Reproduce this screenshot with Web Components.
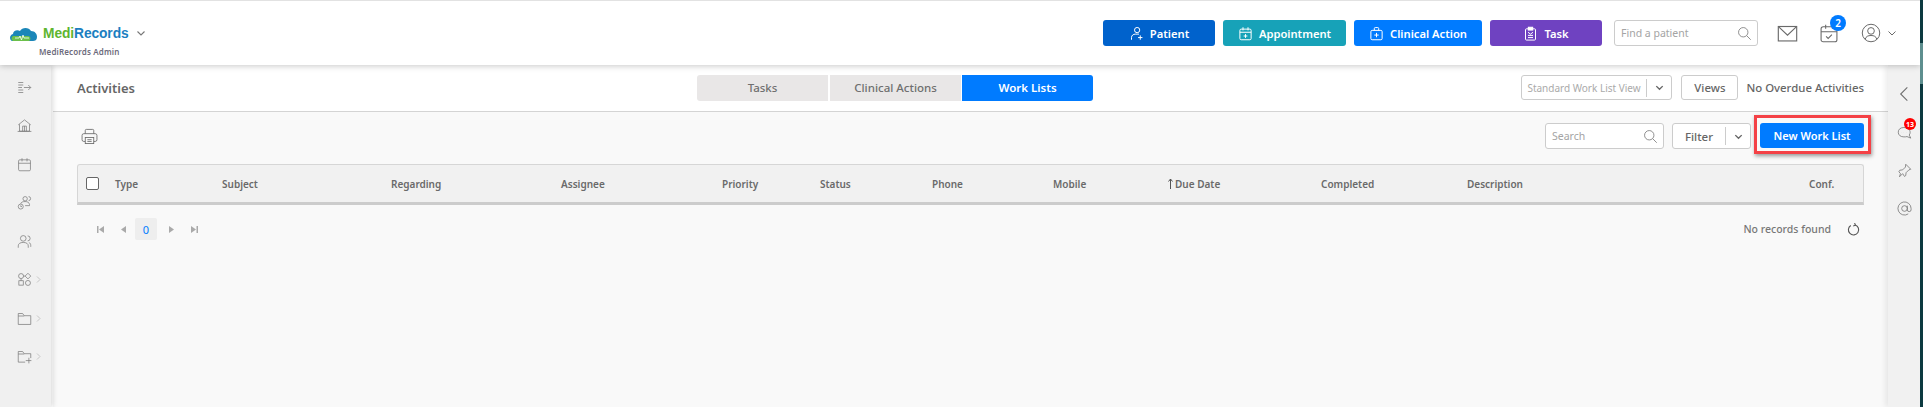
<!DOCTYPE html>
<html>
<head>
<meta charset="utf-8">
<title>Activities</title>
<style>
    html, body { margin: 0; height: 100%; overflow: hidden; background: #fff; }
    body { font-family: "Noto Sans", "Open Sans", sans-serif; color: #666; }
</style>
</head>
<body>
<medi-app></medi-app>
<script>
// stroke icons shared by all the elements, 24 box
const ICONS = {
    patient: '<circle cx="13" cy="6.5" r="4.2"/><path d="M4 22v-3.5c0-3.500 3-5.500 6-5.500h6"/><path d="M18 15v7M14.5 18.500h7"/>',
    appointment: '<rect x="3" y="5" width="18" height="17" rx="2"/><path d="M3 10h18M8 2v5M16 2v5M12 13v6M9 16h6"/>',
    clinical: '<rect x="3" y="7" width="18" height="15" rx="2"/><path d="M8.5 7V4A1.500 1.500 0 0 1 10 2.500h4A1.500 1.500 0 0 1 15.500 4v3M12 11v7M8.500 14.500h7"/>',
    task: '<rect x="4" y="4.5" width="16" height="18" rx="1.5"/><rect x="8.5" y="2" width="7" height="4.500" fill="currentColor"/><path d="M8 10l4 3 4-3M8 15h8M8 18.500h8"/>',
    search: '<circle cx="10" cy="10" r="7.5"/><path d="M15.5 15.500L22 22"/>',
    mail: '<rect x="1.5" y="4" width="21" height="16.500"/><path d="M2 4.500l10 9.500 10-9.500"/>',
    calcheck: '<rect x="2.5" y="4.5" width="19" height="18" rx="2.500"/><path d="M2.5 10.500h19M8 2v5M16 2v5M8.500 16l2.500 2.500 4.500-4.500"/>',
    user: '<circle cx="12" cy="12" r="10.5"/><circle cx="12" cy="9.500" r="4"/><path d="M5 19.500c1-3.500 3.500-4.500 7-4.500s6 1 7 4.500"/>',
    chevron: '<path d="M5 9l7 7 7-7"/>',
    collapse: '<path d="M2 4h8M2 8h8M2 12h6M2 16h8M2 20h8M11 12h11M18 8l4 4-4 4"/>',
    home: '<path d="M2 11L12 3l10 8M4 10v11h16V10M1 21.500h22M9 21v-8h6v8M12 13v8"/>',
    calendar: '<rect x="2.5" y="4.5" width="19" height="17.500" rx="2"/><path d="M2.5 10h19M8 2v5M16 2v5"/>',
    people: '<circle cx="13" cy="6" r="3.5"/><path d="M6 14c.5-2.500 3-3.500 7-3.500s6.500 1.500 7 4.500v2h-7M18.500 2.500a3.200 3.200 0 0 1 0 6.500"/><circle cx="6" cy="18.500" r="4"/><path d="M6 16.500v2h2"/>',
    users: '<circle cx="10" cy="7" r="4.5"/><path d="M2 22v-3c0-3.500 3-5.500 8-5.500s8 2 8 5.500v3M17 3a4 4 0 0 1 0 8M19 13.500c2 1 3 2.500 3 5v2"/>',
    workflow: '<circle cx="6.5" cy="6.5" r="4"/><path d="M17.5 2L22 6.500 17.5 11 13 6.500z"/><rect x="3" y="14" width="7" height="7"/><circle cx="17.5" cy="17.5" r="4"/><path d="M10.5 6.500H13M6.500 10.500V14"/>',
    folder: '<path d="M2 21.500V4h7l2.500 3.500H22v14z"/><path d="M2 8h9.500"/>',
    folderplus: '<path d="M13 21H2V4h7l2.500 3.500H22v7"/><path d="M2 8h9.500M19 14v9M14 18.500h9"/>',
    right: '<path d="M8 4l8 8-8 8"/>',
    back: '<path d="M17 2L7 12l10 10"/>',
    chat: '<path d="M11 4c5.500 0 10 3.200 10 7.500 0 2-.5 3.500-1.500 4.500l2.500 5-6-2.500c-1.500.5-3 .5-5 .5-5.500 0-9-3-9-7.500S5.500 4 11 4z"/><path d="M7 12h.1M11 12h.1M15 12h.1"/>',
    pin: '<path d="M14 2l8 8-3 1-4.500 4.500-.5 4.500-2 1.500-3-4.500L4 22l1.500-5L3 14l1.500-2.500L9 11l4.500-4.500z"/>',
    at: '<circle cx="12" cy="12" r="4.5"/><path d="M16.5 7.500v6.500a3 3 0 0 0 6 0v-2a10.500 10.500 0 1 0-4.500 8.600"/>',
    printer: '<path d="M6 8V3.500A1.500 1.500 0 0 1 7.500 2h9A1.500 1.500 0 0 1 18 3.500V8"/><path d="M6 19H4a2.500 2.500 0 0 1-2.500-2.500v-6A2.500 2.500 0 0 1 4 8h16a2.500 2.500 0 0 1 2.500 2.500v6A2.500 2.500 0 0 1 20 19h-2"/><rect x="6" y="13.5" width="12" height="8.500"/><path d="M9 16.500h6M9 19h6M18.500 11h.1"/>',
    refresh: '<path d="M15 3.500A9.500 9.500 0 1 1 7 4.500"/><path d="M14 0l1.500 4-4 1.500"/>'
};

const icon = (name, size = 18, sw = 1.5) =>
    `<svg width="${size}" height="${size}" viewBox="0 0 24 24" fill="none" stroke="currentColor" stroke-width="${sw}" aria-hidden="true">${ICONS[name]}</svg>`;

// small base so every class only has to hand over its css and markup
class ShadowBase extends HTMLElement {
    constructor(css, html) {
        super();
        this.attachShadow({mode: 'open'});
        const template = document.createElement('template');
        template.innerHTML = `<style>${css}</style>${html}`;
        this.shadowRoot.appendChild(template.content.cloneNode(true));
    }
}

class ActionButton extends ShadowBase {
    constructor() {
        super(`
            :host { display: block; }
            div {
                height: 26px; border-radius: 3px; color: #fff; display: flex;
                align-items: center; justify-content: center; gap: 6px;
                font-size: 11.2px; font-weight: 600; background: var(--bg);
            }
            svg { display: block; }
        `, `<div><span id="i" style="display:flex"></span><slot></slot></div>`);
    }
    connectedCallback() {
        this.shadowRoot.querySelector('#i').innerHTML = icon(this.getAttribute('icon'), 15, 1.6);
    }
}

class SearchBox extends ShadowBase {
    constructor() {
        super(`
            :host { display: block; flex: none; }
            div {
                height: 24px; border: 1px solid #ccc; border-radius: 3px; background: #fff;
                display: flex; align-items: center; justify-content: space-between;
                padding: 0 5px 0 6px; font-size: 10.5px; color: #a4a4a4;
            }
            svg { display: block; color: #777; }
        `, `<div><slot></slot>${icon('search', 15, 1.3)}</div>`);
    }
}

class AppHeader extends ShadowBase {
    constructor() {
        super(`
            :host {
                display: flex; height: 65px; box-sizing: border-box; align-items: flex-start;
                background: #fff; border-top: 1px solid #e2e2e2; position: relative; z-index: 3;
                box-shadow: 0 1px 6px rgba(0,0,0,.22); padding-top: 19px;
            }
            .logo { margin-left: 9px; width: 150px; display: flex; flex-direction: column; flex: none; }
            .mark { display: flex; align-items: center; height: 26px; }
            .name { font: 700 13.8px "Liberation Sans", sans-serif; letter-spacing: -.1px; margin-left: 4px; color: #1b7fc1; }
            .name b { color: #5eb52f; font-weight: 700; }
            .mark svg.c { margin-left: 6px; color: #777; }
            .org { font-size: 8px; font-weight: 600; color: #6d6b7b; margin: 0 0 0 30px; letter-spacing: .15px; }
            .actions { margin-left: 944px; display: flex; gap: 8px; flex: none; }
            action-button:nth-child(1) { width: 112px; }
            action-button:nth-child(2) { width: 123px; }
            action-button:nth-child(3) { width: 128px; }
            action-button:nth-child(4) { width: 112px; }
            search-box { width: 144px; margin-left: 12px; }
            .tools { display: flex; color: #6a6a6a; margin-left: 19px; height: 26px; align-items: center; position: relative; flex: none; }
            .tools svg { display: block; }
            .badge {
                position: absolute; left: 53px; top: -5px; width: 16px; height: 16px; border-radius: 50%;
                background: #007bff; color: #fff; font-size: 10px; font-weight: 600;
                display: flex; align-items: center; justify-content: center;
            }
            .mail { margin-right: 21px; }
            .cal { margin-right: 22px; }
            .chev { margin-left: 5px; }
        `, `
            <div class="logo">
                <div class="mark">
                    <svg width="30" height="18" viewBox="0 0 30 18">
                        <path d="M3 17c-2.500-1-3-6 1-7 0-3 4-5 7-3 2-4 9-4 11 0 4 0 6 3 6 6 0 3-2 4-4 4z" fill="#1b86b8"/>
                        <path d="M4 17c-2-1-2-4 0-5h15c3 0 3 4 1 5z" fill="#6cc04a"/>
                        <path d="M6 14h4l1-2 1.500 4 1.500-5 1 3h5" fill="none" stroke="#fff" stroke-width=".8"/>
                    </svg>
                    <span class="name"><b>Medi</b>Records</span>
                    ${icon('chevron', 12, 2.2).replace('<svg', '<svg class="c"')}
                </div>
                <div class="org">MediRecords Admin</div>
            </div>
            <div class="actions">
                <action-button icon="patient" style="--bg:#0062cc">Patient</action-button>
                <action-button icon="appointment" style="--bg:#17a2b8">Appointment</action-button>
                <action-button icon="clinical" style="--bg:#007bff">Clinical Action</action-button>
                <action-button icon="task" style="--bg:#6f42c1">Task</action-button>
            </div>
            <search-box>Find a patient</search-box>
            <div class="tools">
                <span class="mail">${icon('mail', 21, 1.3)}</span>
                <span class="cal">${icon('calcheck', 20, 1.3)}</span>
                <span class="badge">2</span>
                <span>${icon('user', 20, 1.2)}</span>
                <span class="chev">${icon('chevron', 12, 2)}</span>
            </div>
        `);
    }
}

class NavRail extends ShadowBase {
    constructor() {
        const items = [
            ['collapse'], ['home'], ['calendar'], ['people'], ['users'],
            ['workflow', 1], ['folder', 1], ['folderplus', 1]
        ];
        super(`
            :host {
                display: flex; flex-direction: column; width: 51px; background: #f0f0f0;
                padding-top: 3px; box-sizing: border-box; position: relative; z-index: 2;
                box-shadow: 2px 0 5px rgba(0,0,0,.14); flex: none;
            }
            div { height: 38.5px; display: flex; align-items: center; padding-left: 17px; color: #777; gap: 2px; }
            svg { display: block; }
            .more { color: #aaa; }
        `, items.map(([name, more]) =>
            `<div>${icon(name, 15, 1.15)}${more ? `<span class="more">${icon('right', 9, 1.6)}</span>` : ''}</div>`).join(''));
    }
}

class ActivitiesBar extends ShadowBase {
    constructor() {
        super(`
            :host {
                display: flex; height: 47px; box-sizing: border-box; background: #fff; align-items: center;
                border-bottom: 1px solid #d4d4d4; padding: 0 24px 1px 24px;
            }
            h1 { margin: 0; font-size: 13px; font-weight: 600; color: #666; width: 620px; flex: none; }
            .tabs { display: flex; gap: 2px; font-size: 11.5px; font-weight: 500; flex: none; }
            .tabs span {
                width: 131px; height: 26px; display: flex; align-items: center; justify-content: center;
                background: #e9e7e7; color: #6f6f6f;
            }
            .tabs span:first-child { border-radius: 3px 0 0 3px; }
            .tabs span:nth-child(2) { margin-right: -1px; }
            .tabs .on { background: #007bff; color: #fff; font-weight: 600; border-radius: 0 3px 3px 0; }
            .right { margin-left: auto; display: flex; align-items: center; font-size: 11.4px; }
            .select {
                width: 151px; height: 25px; border: 1px solid #ccc; border-radius: 3px; display: flex; align-items: center;
                color: #aaa; font-size: 10px; padding-left: 5px; box-sizing: border-box; flex: none;
            }
            .select i { margin-left: auto; border-left: 1px solid #ccc; width: 24px; height: 18px; display: flex; align-items: center; justify-content: center; color: #666; }
            .views {
                margin-left: 9px; width: 57px; height: 25px; box-sizing: border-box; border: 1px solid #ccc; border-radius: 3px; display: flex;
                align-items: center; justify-content: center; color: #666; font-weight: 500;
            }
            .status { margin-left: 8px; color: #666; font-weight: 500; }
            svg { display: block; }
        `, `
            <h1>Activities</h1>
            <div class="tabs"><span>Tasks</span><span>Clinical Actions</span><span class="on">Work Lists</span></div>
            <div class="right">
                <div class="select">Standard Work List View<i>${icon('chevron', 11, 3)}</i></div>
                <div class="views">Views</div>
                <div class="status">No Overdue Activities</div>
            </div>
        `);
    }
}

class ListToolbar extends ShadowBase {
    constructor() {
        super(`
            :host { display: flex; align-items: flex-start; height: 52px; box-sizing: border-box; padding: 11px 24px 0 27px; }
            .print { color: #6a6a6a; margin: 5px 0 0 1px; }
            svg { display: block; }
            search-box { width: 119px; margin-left: auto; }
            .filter {
                margin-left: 8px; width: 79px; height: 26px; box-sizing: border-box; border: 1px solid #ccc; border-radius: 3px; background: #fff;
                display: flex; align-items: center; font-size: 11.5px; font-weight: 500; color: #666; flex: none;
            }
            .filter span { flex: 1; text-align: center; }
            .filter i { width: 24px; height: 18px; border-left: 1px solid #ccc; display: flex; align-items: center; justify-content: center; }
            .new {
                margin-left: 9px; width: 104px; height: 25px; background: #007bff; color: #fff; border-radius: 3px;
                font-size: 11px; font-weight: 600; display: flex; align-items: center; justify-content: center; position: relative; flex: none;
            }
            .new::after {
                content: ""; position: absolute; inset: -8px -7px -6px -6px; border: 3px solid #f44146;
                box-shadow: 1px 2px 4px rgba(0,0,0,.4);
            }
        `, `
            <span class="print">${icon('printer', 17, 1.2)}</span>
            <search-box>Search</search-box>
            <div class="filter"><span>Filter</span><i>${icon('chevron', 11, 3)}</i></div>
            <div class="new">New Work List</div>
        `);
    }
}

class DataGrid extends ShadowBase {
    constructor() {
        // widths come from where the headings sit
        const arrow = '<svg width="5" height="11" viewBox="0 0 5 11" fill="none" stroke="#555"><path d="M2.500 11V1M.5 3.500L2.500 1l2 2.500"/></svg>';
        const cols = [
            ['Type', 107], ['Subject', 169], ['Regarding', 170], ['Assignee', 161], ['Priority', 98],
            ['Status', 112], ['Phone', 121], ['Mobile', 115], [`${arrow}Due Date`, 153], ['Completed', 146], ['Description', 342], ['Conf.', 0]
        ];
        super(`
            :host {
                display: grid; margin: 0 24px; height: 41px; box-sizing: border-box; align-items: center;
                background: #f1f1f1; border: 1px solid #d6d6d6; border-bottom: 3px solid #ccc; border-radius: 3px 3px 0 0;
                grid-template-columns: 37px ${cols.slice(0, -1).map(c => c[1] + 'px').join(' ')} 1fr;
                font-size: 10px; font-weight: 600; color: #6a6a6a;
            }
            .box { width: 11px; height: 11px; border: 1px solid #666; border-radius: 2px; background: #fff; margin-left: 8px; }
            :host > span:nth-child(2) { margin-top: -2px; }
            svg { margin: -3px 2px 0 0; vertical-align: middle; }
        `, `<div class="box"></div>${cols.map(c => `<span>${c[0]}</span>`).join('')}`);
    }
}

class GridPager extends ShadowBase {
    constructor() {
        const tri = (d, bar) => `<svg width="7" height="7" viewBox="0 0 7 7" fill="#aaa">${d}${bar || ''}</svg>`;
        super(`
            :host { display: flex; align-items: center; height: 22px; margin: 13px 0 0; padding: 0 28px 0 36px; }
            svg { display: block; }
            .nav { width: 23px; display: flex; justify-content: center; }
            .cur {
                width: 22px; height: 22px; background: #eee; border-radius: 2px; color: #007bff; font-size: 11px;
                display: flex; align-items: center; justify-content: center; margin: 0 3px 0 0;
            }
            .msg { margin-left: auto; font-size: 10.5px; font-weight: 500; color: #777; }
            .re { margin-left: 16px; color: #555; }
        `, `
            <span class="nav">${tri('<path d="M7 0v7L2 3.500z"/>', '<rect width="1.5" height="7"/>')}</span>
            <span class="nav">${tri('<path d="M6 0v7L1 3.500z"/>')}</span>
            <span class="cur">0</span>
            <span class="nav">${tri('<path d="M1 0v7l5-3.500z"/>')}</span>
            <span class="nav">${tri('<path d="M0 0v7l5-3.500z"/>', '<rect x="5.5" width="1.5" height="7"/>')}</span>
            <span class="msg">No records found</span>
            <span class="re">${icon('refresh', 13, 2)}</span>
        `);
    }
}

class ToolRail extends ShadowBase {
    constructor() {
        super(`
            :host {
                display: flex; flex-direction: column; width: 32px; flex: none; background: #f1f1f1; align-items: center;
                padding-top: 10px; box-sizing: border-box; color: #6e6e6e; position: relative;
                box-shadow: -3px 0 5px rgba(0,0,0,.07);
            }
            div { height: 38px; width: 16px; display: flex; align-items: center; justify-content: center; position: relative; }
            svg { display: block; }
            b {
                position: absolute; left: 8px; top: 5px; width: 12px; height: 12px; border-radius: 50%;
                background: #f00; color: #fff; font-size: 7px; display: flex; align-items: center; justify-content: center;
            }
        `, `
            <div>${icon('back', 16, 1.6)}</div>
            <div>${icon('chat', 15, 1.2)}<b>13</b></div>
            <div>${icon('pin', 15, 1.2)}</div>
            <div>${icon('at', 15, 1.2)}</div>
        `);
    }
}

class MediApp extends ShadowBase {
    constructor() {
        super(`
            :host { display: flex; height: 407px; width: 1923px; }
            .page { width: 1920px; flex: none; display: flex; flex-direction: column; }
            .body { flex: 1; display: flex; min-height: 0; }
            main { flex: 1; min-width: 0; background: #f9f9f9; margin-left: 2px; }
            .edge { width: 3px; flex: none; background: linear-gradient(#0c3a40 43px, #5e8f8f 43px, #5e8f8f 84px, #0c3a40 84px); position: relative; z-index: 4; }
        `, `
            <div class="page">
                <app-header></app-header>
                <div class="body">
                    <nav-rail></nav-rail>
                    <main>
                        <activities-bar></activities-bar>
                        <list-toolbar></list-toolbar>
                        <data-grid></data-grid>
                        <grid-pager></grid-pager>
                    </main>
                    <tool-rail></tool-rail>
                </div>
            </div>
            <div class="edge"></div>
        `);
    }
}

customElements.define('action-button', ActionButton);
customElements.define('search-box', SearchBox);
customElements.define('app-header', AppHeader);
customElements.define('nav-rail', NavRail);
customElements.define('activities-bar', ActivitiesBar);
customElements.define('list-toolbar', ListToolbar);
customElements.define('data-grid', DataGrid);
customElements.define('grid-pager', GridPager);
customElements.define('tool-rail', ToolRail);
customElements.define('medi-app', MediApp);
</script>
</body>
</html>
